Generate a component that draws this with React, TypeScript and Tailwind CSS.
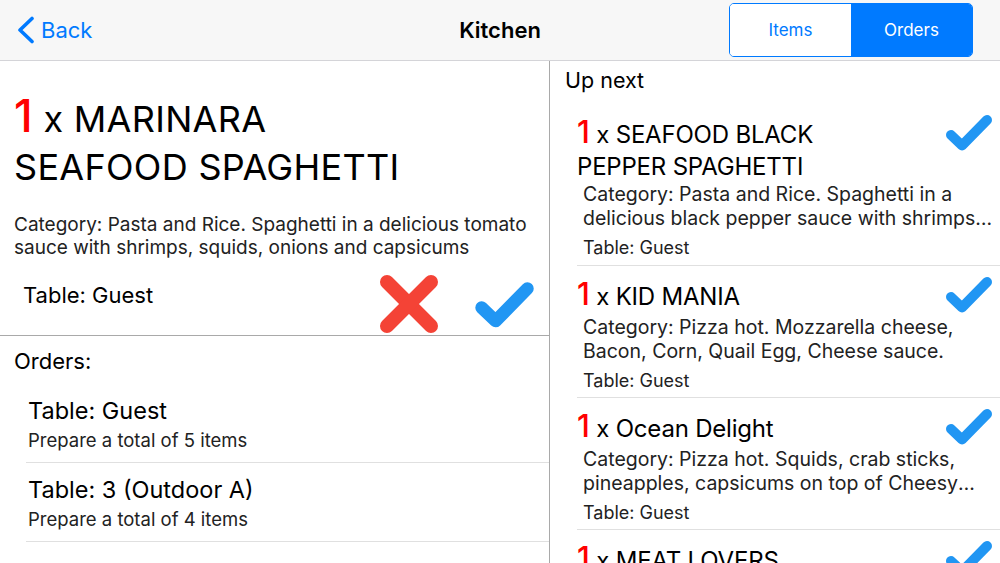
import React from "react";

const BLUE = "#2196f3";

function CheckIcon({ w, h }: { w: number; h: number }) {
  return (
    <svg width={w} height={h} viewBox="0 0 48 37" className="block">
      <polyline
        points="6,21 17,31.5 42,6"
        fill="none"
        stroke={BLUE}
        strokeWidth="10"
        strokeLinecap="round"
        strokeLinejoin="round"
      />
    </svg>
  );
}

function XIcon() {
  return (
    <svg width={62} height={62} viewBox="0 0 62 62" className="block">
      <line x1="9" y1="9" x2="53" y2="53" stroke="#f44336" strokeWidth="14" strokeLinecap="round" />
      <line x1="53" y1="9" x2="9" y2="53" stroke="#f44336" strokeWidth="14" strokeLinecap="round" />
    </svg>
  );
}

const upNext = [
  {
    name: "SEAFOOD BLACK PEPPER SPAGHETTI",
    desc: "Category: Pasta and Rice. Spaghetti in a delicious black pepper sauce with shrimps, squids, onions and capsicums",
  },
  {
    name: "KID MANIA",
    desc: "Category: Pizza hot. Mozzarella cheese, Bacon, Corn, Quail Egg, Cheese sauce.",
  },
  {
    name: "Ocean Delight",
    desc: "Category: Pizza hot. Squids, crab sticks, pineapples, capsicums on top of Cheesy crust with thousand island sauce",
  },
  {
    name: "MEAT LOVERS",
    desc: "Category: Pizza hot. Ham, bacon, sausages, pepperoni and mozzarella cheese.",
  },
];

const orders = [
  { table: "Table: Guest", total: "Prepare a total of 5 items" },
  { table: "Table: 3 (Outdoor A)", total: "Prepare a total of 4 items" },
];

export default function App() {
  return (
    <div className="w-[1000px] h-[563px] overflow-hidden bg-white flex flex-col text-black font-['Inter','Noto_Sans',sans-serif]">
      {/* Header */}
      <header className="h-[61px] shrink-0 bg-[#f7f7f7] border-b border-[#d4d4d8] grid grid-cols-[1fr_auto_1fr] items-center">
        <div className="flex items-center pl-[17px]">
          <svg width="18" height="28" viewBox="0 0 18 28" className="block">
            <polyline
              points="15,2.5 3,14 15,25.5"
              fill="none"
              stroke="#007aff"
              strokeWidth="3.6"
              strokeLinecap="round"
              strokeLinejoin="round"
            />
          </svg>
          <span className="ml-[6px] text-[22px] text-[#007aff] leading-none">Back</span>
        </div>
        <div className="text-[22px] font-semibold leading-none">Kitchen</div>
        <div className="flex justify-end pr-[27px]">
          <div className="flex h-[54px] w-[244px] rounded-[5px] border border-[#007aff] overflow-hidden text-[17px]">
            <div className="flex-1 flex items-center justify-center bg-white text-[#007aff] pt-[2px]">Items</div>
            <div className="flex-1 flex items-center justify-center bg-[#007aff] text-white pt-[2px]">Orders</div>
          </div>
        </div>
      </header>

      <div className="flex flex-1 min-h-0">
        {/* Left panel */}
        <section className="w-[550px] shrink-0 border-r border-[#a9a9a9] flex flex-col">
          <div className="px-[14px] pt-[31px]">
            <div className="text-[36px] leading-[48px] tracking-[0.3px] text-black">
              <span className="text-[45px] font-medium text-[#ff0000]">1</span> x MARINARA
              <br />
              SEAFOOD SPAGHETTI
            </div>
            <p className="mt-[22px] text-[19px] leading-[23px] text-[#222]">
              Category: Pasta and Rice. Spaghetti in a delicious tomato sauce with shrimps, squids, onions and
              capsicums
            </p>
          </div>
          <div className="flex items-start mt-[14px] pl-[23px] pr-[14px]">
            <div className="flex-1 mt-[9px] text-[22px] leading-[27px]">Table: Guest</div>
            <XIcon />
            <div className="ml-[34px] mt-[8px]">
              <CheckIcon w={61} h={47} />
            </div>
          </div>
          <div className="border-t border-[#a9a9a9] pt-[12px]">
            <div className="pl-[14px] text-[22px] leading-[27px]">Orders:</div>
            <div className="ml-[26px] mt-[9px]">
              {orders.map((o) => (
                <div key={o.table} className="border-b border-[#e0e0e0] pl-[2px] pt-[13px] pb-[11px]">
                  <div className="text-[23.5px] leading-[28px]">{o.table}</div>
                  <div className="mt-[4px] text-[18.5px] leading-[22px] text-[#222]">{o.total}</div>
                </div>
              ))}
            </div>
          </div>
        </section>

        {/* Right panel */}
        <section className="flex-1 min-w-0 pt-[6px]">
          <div className="pl-[15px] text-[21.5px] leading-[27px]">Up next</div>
          <div className="ml-[27px] mt-[10px]">
            {upNext.map((it, i) => (
              <div
                key={it.name}
                className={
                  i === 0
                    ? "relative border-b border-[#e0e0e0] pt-[12px] pb-[5px]"
                    : "relative border-b border-[#e0e0e0] pt-[12px] pb-[4px]"
                }
              >
                <div className="absolute right-[7px] top-[10px]">
                  <CheckIcon w={48} h={37} />
                </div>
                <div className="pr-[110px] text-[24px] leading-[32px] tracking-[-0.2px]">
                  <span className="text-[31px] font-medium text-[#ff0000]">1</span> x {it.name}
                </div>
                <p
                  className={
                    i === 0
                      ? "mt-[-1px] pl-[6px] pr-[4px] text-[19.5px] leading-[24px] text-[#222] line-clamp-2"
                      : "mt-[2px] pl-[6px] pr-[4px] text-[19.5px] leading-[24px] text-[#222] line-clamp-2"
                  }
                >
                  {it.desc}
                </p>
                <div className="mt-[6px] pl-[6px] text-[18px] leading-[24px] text-[#222]">Table: Guest</div>
              </div>
            ))}
          </div>
        </section>
      </div>
    </div>
  );
}
